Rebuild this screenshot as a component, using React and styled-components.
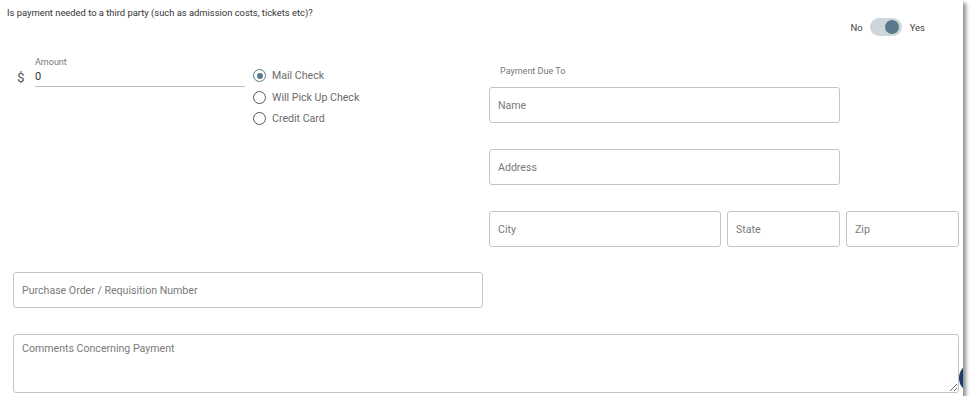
import React from 'react';
import styled, { createGlobalStyle } from 'styled-components';

const GlobalStyle = createGlobalStyle`
  html, body {
    margin: 0;
    background: #fff;
  }
  body {
    font-family: Roboto, "Liberation Sans", sans-serif;
  }
`;

const Panel = styled.div`
  position: relative;
  overflow: hidden;
  width: 963px;
  height: 396px;
  background: #fff;
  box-shadow: 3px 3px 4px rgba(0, 0, 0, 0.45);
  box-sizing: border-box;
`;

const Question = styled.div`
  padding: 7px 7px 0;
  height: 18px;
  box-sizing: border-box;
  font-size: 9.4px;
  line-height: 12px;
  color: #333;
`;

const ToggleRow = styled.div`
  display: flex;
  align-items: center;
  justify-content: flex-end;
  gap: 7px;
  height: 18px;
  padding-right: 38px;
  font-size: 9.5px;
  color: #444;
`;

const Track = styled.div`
  position: relative;
  width: 32px;
  height: 18px;
  border-radius: 9px;
  background: #cdd6db;
  margin-right: 1px;
`;

const Thumb = styled.div`
  position: absolute;
  top: 2px;
  left: ${({ $on }) => ($on ? '15px' : '3px')};
  width: 14px;
  height: 14px;
  border-radius: 50%;
  background: #587a8b;
`;

const Form = styled.div`
  padding: 21px 4px 0 13px;
`;

const TopGrid = styled.div`
  display: grid;
  grid-template-columns: minmax(0, 1fr) minmax(0, 1fr);
  column-gap: 6px;
`;

const LeftTop = styled.div`
  display: grid;
  grid-template-columns: minmax(0, 1fr) minmax(0, 1fr);
  column-gap: 6px;
  align-items: start;
`;

const AmountField = styled.div`
  display: flex;
  flex-direction: column;
`;

const SmallLabel = styled.div`
  font-size: 9px;
  line-height: ${({ $lh }) => $lh || 10}px;
  color: #777;
  margin-left: ${({ $indent }) => $indent || 0}px;
  margin-bottom: ${({ $bottom }) => $bottom || 0}px;
`;

const AmountRow = styled.div`
  display: flex;
  align-items: center;
  height: 20px;
`;

const Dollar = styled.span`
  flex: none;
  width: 22px;
  padding-left: 4px;
  box-sizing: border-box;
  font-size: 13.5px;
  color: #555;
`;

const UnderlineInput = styled.input`
  flex: 1;
  min-width: 0;
  height: 20px;
  box-sizing: border-box;
  border: none;
  border-bottom: 1px solid #bdbdbd;
  padding: 0;
  font-family: inherit;
  font-size: 11px;
  color: #333;
  outline: none;
`;

const RadioGroup = styled.div`
  display: flex;
  flex-direction: column;
  padding-top: 8px;
`;

const RadioRow = styled.label`
  display: flex;
  align-items: center;
  gap: 6px;
  height: 21.5px;
  padding-left: 2px;
  font-size: 10.6px;
  color: #6a6a6a;
`;

const RadioCircle = styled.span`
  display: flex;
  align-items: center;
  justify-content: center;
  width: 13px;
  height: 13px;
  box-sizing: border-box;
  border-radius: 50%;
  border: 1.5px solid ${({ $checked }) => ($checked ? '#587a8b' : '#555')};

  &::after {
    content: '';
    display: ${({ $checked }) => ($checked ? 'block' : 'none')};
    width: 6px;
    height: 6px;
    border-radius: 50%;
    background: #587a8b;
  }
`;

const Payee = styled.div`
  padding-top: 8px;
`;

const PayeeGrid = styled.div`
  display: grid;
  grid-template-columns: repeat(4, minmax(0, 1fr));
  column-gap: 6px;
  row-gap: 26px;
`;

const Box = styled.input`
  grid-column: span ${({ $span }) => $span || 1};
  width: 100%;
  min-width: 0;
  height: 36px;
  box-sizing: border-box;
  border: 1px solid #c4c4c4;
  border-radius: 3px;
  padding: 0 8px;
  font-family: inherit;
  font-size: 10.6px;
  color: #333;
  outline: none;

  &::placeholder {
    color: #7a7a7a;
  }
`;

const HalfRow = styled.div`
  display: grid;
  grid-template-columns: minmax(0, 1fr) minmax(0, 1fr);
  column-gap: 6px;
  margin-top: 25px;
`;

const Comments = styled.textarea`
  display: block;
  width: 100%;
  height: 59px;
  margin-top: 26px;
  box-sizing: border-box;
  border: 1px solid #c4c4c4;
  border-radius: 3px;
  padding: 7px 8px;
  font-family: inherit;
  font-size: 10.6px;
  line-height: 14px;
  outline: none;
  resize: vertical;

  &::placeholder {
    color: #7a7a7a;
  }
`;

const Fab = styled.div`
  position: absolute;
  left: 959px;
  top: 363px;
  width: 30px;
  height: 30px;
  border-radius: 50%;
  background: #1a3d6d;
`;

const options = ['Mail Check', 'Will Pick Up Check', 'Credit Card'];

const App = () => (
  <>
    <GlobalStyle />
    <Panel>
      <Question>
        Is payment needed to a third party (such as admission costs, tickets etc)?
      </Question>
      <ToggleRow>
        <span>No</span>
        <Track>
          <Thumb $on />
        </Track>
        <span>Yes</span>
      </ToggleRow>

      <Form>
        <TopGrid>
          <LeftTop>
            <AmountField>
              <SmallLabel $indent={22}>Amount</SmallLabel>
              <AmountRow>
                <Dollar>$</Dollar>
                <UnderlineInput defaultValue="0" />
              </AmountRow>
            </AmountField>
            <RadioGroup>
              {options.map((o, i) => (
                <RadioRow key={o}>
                  <RadioCircle $checked={i === 0} />
                  {o}
                </RadioRow>
              ))}
            </RadioGroup>
          </LeftTop>

          <Payee>
            <SmallLabel $indent={11} $bottom={10} $lh={12}>
              Payment Due To
            </SmallLabel>
            <PayeeGrid>
              <Box $span={3} placeholder="Name" />
              <span />
              <Box $span={3} placeholder="Address" />
              <span />
              <Box $span={2} placeholder="City" />
              <Box placeholder="State" />
              <Box placeholder="Zip" />
            </PayeeGrid>
          </Payee>
        </TopGrid>

        <HalfRow>
          <Box placeholder="Purchase Order / Requisition Number" />
        </HalfRow>

        <Comments placeholder="Comments Concerning Payment" />
      </Form>
      <Fab />
    </Panel>
  </>
);

export default App;
